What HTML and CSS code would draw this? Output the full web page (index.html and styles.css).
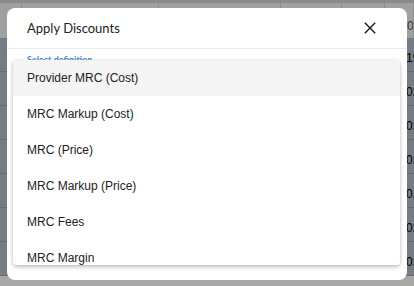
FILE: index.html
```html
<!DOCTYPE html>
<html>
<head>
<meta charset="utf-8">
<link rel="stylesheet" href="styles.css">
</head>
<body>
<div class="page">
  <div class="thead">
    <span class="col c1"></span><span class="col c2"></span><span class="col c3"></span><span class="col c4"></span><span class="col c5"></span><span class="col c6"><span class="hval">00</span></span>
  </div>
  <div class="tbody">
    <div class="trow"><span class="val">19</span></div>
    <div class="trow"><span class="val">02</span></div>
    <div class="trow"><span class="val">02</span></div>
    <div class="trow"><span class="val">02</span></div>
    <div class="trow"><span class="val">02</span></div>
    <div class="trow"><span class="val">02</span></div>
    <div class="trow"><span class="val">02</span></div>
  </div>
  <div class="overlay"></div>
</div>
<div class="modal">
  <div class="modal-head">
    <span class="title">Apply Discounts</span>
    <svg class="close" width="14" height="14" viewBox="0 0 14 14"><path d="M1.8 1.8 L12.2 12.2 M12.2 1.8 L1.8 12.2" stroke="#222" stroke-width="1.5" fill="none"/></svg>
  </div>
  <div class="modal-body">
    <span class="label">Select definition</span>
  </div>
</div>
<div class="menu">
  <div class="item active">Provider MRC (Cost)</div>
  <div class="item">MRC Markup (Cost)</div>
  <div class="item">MRC (Price)</div>
  <div class="item">MRC Markup (Price)</div>
  <div class="item">MRC Fees</div>
  <div class="item">MRC Margin</div>
  <div class="item">Provider NRC (Cost)</div>
  <div class="item">NRC Markup (Cost)</div>
  <div class="item">NRC (Price)</div>
  <div class="item">NRC Markup (Price)</div>
  <div class="item">NRC Fees</div>
  <div class="item">NRC Margin</div>
</div>
</body>
</html>
```
FILE: styles.css
```css
html, body { margin: 0; padding: 0; }
body {
  width: 414px; height: 286px; overflow: hidden; position: relative;
  font-family: Lato, "Liberation Sans", sans-serif;
  background: #ffffff;
}
.page { position: relative; width: 414px; height: 286px; }
.thead {
  height: 38px; display: flex; background: #f3f3f3;
  border-top: 3px solid #d0d0d0; box-sizing: border-box;
}
.col { border-right: 1px solid #d8d8d8; height: 100%; box-sizing: border-box; }
.c1 { width: 22px; } .c2 { width: 137px; } .c3 { width: 122px; } .c4 { width: 61px; } .c5 { width: 43px; } .c6 { flex: 1; display: flex; justify-content: flex-end; padding-top: 16px; overflow: hidden; }
.hval { font-family: "Liberation Sans", Arial, sans-serif; font-size: 12px; color: #555; width: 6px; overflow: hidden; }
.tbody { background: #b3bdca; }
.trow {
  height: 33px; border-bottom: 1px solid #9aa3b0; display: flex; justify-content: flex-end; align-items: center;
}
.val { font-family: "Liberation Sans", Arial, sans-serif; font-size: 12px; color: #000; width: 8px; overflow: hidden; white-space: nowrap; padding-top: 6px; }
.overlay { position: absolute; inset: 0; background: rgba(0,0,0,0.34); }
.modal {
  position: absolute; left: 7px; top: 8px; width: 400px; height: 272px;
  background: #fff; border-radius: 8px;
}
.modal-head {
  height: 40px; display: flex; align-items: center; justify-content: space-between;
  padding: 0 30px 0 20px; border-bottom: 1px solid #ececec;
}
.title { font-size: 13px; color: #222; }
.close { display: block; }
.modal-body { padding: 2px 20px; line-height: 12px; }
.label { font-size: 9px; color: #4f8ad0; font-weight: 700; }
.menu {
  position: absolute; left: 13px; top: 60px; width: 387px; height: 205px;
  background: #fff; border-radius: 4px; overflow-y: scroll;
  box-shadow: 0 2px 4px rgba(0,0,0,0.25), 0 0 3px rgba(0,0,0,0.08);
  font-family: "Liberation Sans", Arial, sans-serif;
}
.menu::-webkit-scrollbar { width: 12px; }
.menu::-webkit-scrollbar-track { background: #e3e3e3; border-radius: 0 0 6px 6px; }
.menu::-webkit-scrollbar-thumb { background: #6b6b6b; border-radius: 6px; }
.item {
  height: 36px; display: flex; align-items: center; padding-left: 14px;
  font-size: 12px; color: #222;
}
.item.active { background: #f4f4f4; }
```
